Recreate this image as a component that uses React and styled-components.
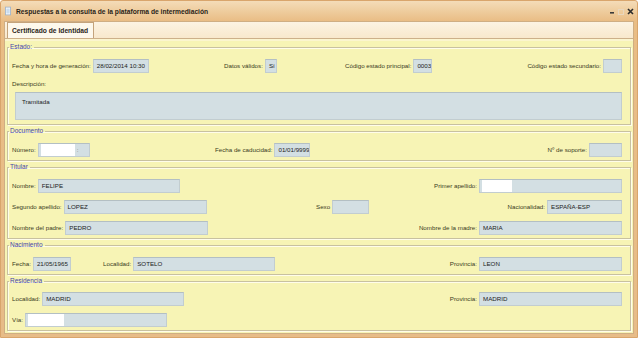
import React from "react";
import styled, { createGlobalStyle } from "styled-components";

const GlobalStyle = createGlobalStyle`
  body {
    margin: 0;
    background: #ffffff;
    font-family: "Liberation Sans", Arial, sans-serif;
  }
`;

export default function App() {
  return (
    <>
      <GlobalStyle />
      <Window>
        <TitleBar>
          <PageIcon viewBox="0 0 7 10">
            <rect x="0.5" y="0.5" width="6" height="9" fill="#ffffff" stroke="#9fb4cc" />
            <rect x="1.5" y="2" width="4" height="6" fill="#c9dcef" />
          </PageIcon>
          <Title>Respuestas a la consulta de la plataforma de intermediación</Title>
          <Controls>
            <svg width="6" height="6" viewBox="0 0 6 6">
              <rect x="1" y="3" width="4" height="1.6" fill="#3a3a3a" />
            </svg>
            <svg width="6" height="6" viewBox="0 0 6 6">
              <rect x="0.5" y="0.5" width="5" height="5" fill="none" stroke="#e9d7bd" />
            </svg>
            <svg width="7" height="7" viewBox="0 0 7 7">
              <path d="M1 1 L6 6 M6 1 L1 6" stroke="#2b2b2b" strokeWidth="1.6" />
            </svg>
          </Controls>
        </TitleBar>
        <Panel>
          <TabStrip>
            <Tab>Certificado de Identidad</Tab>
          </TabStrip>
          <Body>
            <Group>
              <Legend>Estado:</Legend>
              <Row>
                <Field $w={212}>
                  <Label>Fecha y hora de generación:</Label>
                  <Input $w={56}>28/02/2014 10:30</Input>
                </Field>
                <Field $w={121}>
                  <Label>Datos válidos:</Label>
                  <Input $w={12}>Sí</Input>
                </Field>
                <Field $w={182}>
                  <Label>Código estado principal:</Label>
                  <Input $w={19}>0003</Input>
                </Field>
                <Field $end>
                  <Label>Código estado secundario:</Label>
                  <Input $w={19} />
                </Field>
              </Row>
              <DescLabel>Descripción:</DescLabel>
              <TextArea>Tramitada</TextArea>
            </Group>

            <Group>
              <Legend>Documento</Legend>
              <Row>
                <Field $w={203}>
                  <Label>Número:</Label>
                  <Input $w={52}>
                    <Redact $w={34} />
                    <Dots>:</Dots>
                  </Input>
                </Field>
                <Field $w={200}>
                  <Label>Fecha de caducidad:</Label>
                  <Input $w={36}>01/01/9999</Input>
                </Field>
                <Field $end>
                  <Label>Nº de soporte:</Label>
                  <Input $w={33} />
                </Field>
              </Row>
            </Group>

            <Group>
              <Legend>Titular</Legend>
              <Row>
                <Field $w={200}>
                  <Label>Nombre:</Label>
                  <Input $w={142}>FELIPE</Input>
                </Field>
                <Field $end>
                  <Label>Primer apellido:</Label>
                  <Input $w={143}>
                    <Redact $w={30} />
                  </Input>
                </Field>
              </Row>
              <Row>
                <Field $w={304}>
                  <Label>Segundo apellido:</Label>
                  <Input $w={143}>LOPEZ</Input>
                </Field>
                <Field $w={100}>
                  <Label>Sexo</Label>
                  <Input $w={37} />
                </Field>
                <Field $end>
                  <Label>Nacionalidad:</Label>
                  <Input $w={75}>ESPAÑA-ESP</Input>
                </Field>
              </Row>
              <Row>
                <Field $w={300}>
                  <Label>Nombre del padre:</Label>
                  <Input $w={143}>PEDRO</Input>
                </Field>
                <Field $end>
                  <Label>Nombre de la madre:</Label>
                  <Input $w={143}>MARIA</Input>
                </Field>
              </Row>
            </Group>

            <Group>
              <Legend>Nacimiento</Legend>
              <Row>
                <Field $w={91}>
                  <Label>Fecha:</Label>
                  <Input $w={38}>21/05/1965</Input>
                </Field>
                <Field $w={250}>
                  <Label>Localidad:</Label>
                  <Input $w={142}>SOTELO</Input>
                </Field>
                <Field $end>
                  <Label>Provincia:</Label>
                  <Input $w={143}>LEON</Input>
                </Field>
              </Row>
            </Group>

            <Group $last>
              <Legend>Residencia</Legend>
              <Row>
                <Field $w={250}>
                  <Label>Localidad:</Label>
                  <Input $w={142}>MADRID</Input>
                </Field>
                <Field $end>
                  <Label>Provincia:</Label>
                  <Input $w={143}>MADRID</Input>
                </Field>
              </Row>
              <Row>
                <Field $w={250}>
                  <Label>Vía:</Label>
                  <Input $w={142}>
                    <Redact $w={36} />
                  </Input>
                </Field>
              </Row>
            </Group>
          </Body>
        </Panel>
      </Window>
    </>
  );
}

const Window = styled.div`
  width: 630px;
  padding: 0 3px 3px 3px;
  background: linear-gradient(to bottom, #f4dcb8 0px, #e9bd85 20px, #e7bc88 100%);
  border: 1px solid #d9a56c;
  border-radius: 3px 3px 0 0;
  display: flex;
  flex-direction: column;
`;

const TitleBar = styled.div`
  height: 20px;
  display: flex;
  align-items: center;
  gap: 5px;
  padding-left: 1px;
`;

const PageIcon = styled.svg`
  width: 6px;
  height: 10px;
`;

const Title = styled.div`
  font-size: 6.7px;
  font-weight: bold;
  color: #2a2418;
  flex: 1;
`;

const Controls = styled.div`
  display: flex;
  align-items: center;
  gap: 3px;
  margin-top: 1px;
`;

const Panel = styled.div`
  display: flex;
  flex-direction: column;
  border: 1px solid #cfae84;
  background: #fbefda;
`;

const TabStrip = styled.div`
  height: 16px;
  display: flex;
  align-items: flex-end;
  padding-left: 2px;
  border-bottom: 1px solid #cdb089;
  background: linear-gradient(to bottom, #fcf3e3, #f8e8cc);
`;

const Tab = styled.div`
  height: 15px;
  display: flex;
  align-items: center;
  padding: 0 5px 0 4px;
  background: #fdf8ec;
  border: 1px solid #c4a37b;
  border-bottom: none;
  font-size: 6.7px;
  font-weight: bold;
  color: #2a2418;
`;

const Body = styled.div`
  background: #f7f4b5;
  padding: 2px 2px 2px 2px;
  border-top: 2px solid #fbf5cf;
`;

const Group = styled.fieldset`
  margin: 0 0 ${(p) => (p.$last ? "0" : "2px")} 0;
  padding: ${(p) => (p.$last ? "3px" : "4px")} 8px 0 4px;
  border: 1px solid #c8c1a0;
  box-shadow: inset 1px 1px 0 #fffdea, 1px 1px 0 #fffdea;
  min-width: 0;
`;

const Legend = styled.legend`
  margin-left: -3px;
  padding: 0 2px 0 1px;
  font-size: 6.5px;
  line-height: 8px;
  color: #4646a6;
`;

const Row = styled.div`
  height: 21px;
  display: flex;
  align-items: center;
`;

const Field = styled.div`
  display: flex;
  align-items: center;
  gap: 2px;
  ${(p) => (p.$end ? "flex: 1; justify-content: flex-end;" : `width: ${p.$w}px; flex-shrink: 0;`)}
`;

const Label = styled.span`
  font-size: 6.2px;
  color: #3a3a22;
  white-space: nowrap;
`;

const Input = styled.div`
  box-sizing: border-box;
  width: ${(p) => p.$w}px;
  height: 14px;
  display: flex;
  align-items: center;
  padding-left: 3px;
  background: #d3dfe3;
  border: 1px solid #c2cdd0;
  border-top-color: #b3bfc3;
  font-size: 6.2px;
  color: #222222;
  white-space: nowrap;
  overflow: hidden;
`;

const Redact = styled.span`
  width: ${(p) => p.$w}px;
  height: 12px;
  background: #ffffff;
  margin-left: -1px;
`;

const Dots = styled.span`
  margin-left: 2px;
  color: #666;
`;

const DescLabel = styled.div`
  height: 14px;
  display: flex;
  align-items: center;
  font-size: 6.2px;
  color: #3a3a22;
`;

const TextArea = styled.div`
  box-sizing: border-box;
  margin: 2px 0 4px 3px;
  height: 28px;
  padding: 5px 6px;
  background: #d3dfe3;
  border: 1px solid #c2cdd0;
  border-top-color: #b3bfc3;
  font-size: 6.2px;
  color: #222222;
`;
